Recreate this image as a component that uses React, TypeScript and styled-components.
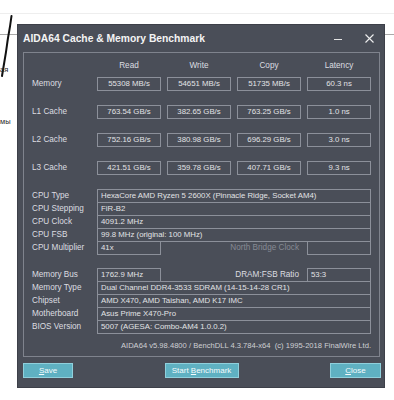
import React from 'react'
import styled, { createGlobalStyle } from 'styled-components'

const GlobalStyle = createGlobalStyle`
    html, body {
        margin: 0;
        padding: 0;
        background: #ffffff;
    }
    body {
        font-family: "Liberation Sans", Arial, sans-serif;
    }
`

const Page = styled.div`
    width: 394px;
    height: 400px;
    overflow: hidden;
    display: flex;
    background:
        linear-gradient(#eeeeee, #eeeeee) 0 13px / 100% 1px no-repeat,
        linear-gradient(#a9a9a9, #a9a9a9) 0 34px / 100% 1px no-repeat,
        #ffffff;
`

const Gutter = styled.div`
    width: 17px;
    flex-shrink: 0;
    position: relative;
`

const Scribble = styled.svg`
    position: absolute;
    left: 0;
    top: 14px;
`

const Snippet = styled.span<{ top: number }>`
    position: absolute;
    left: 0;
    top: ${({ top }) => top}px;
    font-size: 7.5px;
    color: #2a2a2a;
    font-family: "Liberation Sans", "Noto Sans", sans-serif;
`

const Window = styled.div`
    margin-top: 24px;
    width: 368px;
    height: 364px;
    box-sizing: border-box;
    background: #4a4e58;
    border: 1px solid #3d4049;
    display: flex;
    flex-direction: column;
    color: #dcdde0;
`

const TitleBar = styled.div`
    height: 27px;
    display: flex;
    align-items: center;
    justify-content: space-between;
    padding: 0 10px 0 5px;
`

const Title = styled.span`
    font-weight: bold;
    font-size: 10.3px;
    color: #f4f4f4;
`

const Controls = styled.div`
    display: flex;
    align-items: center;
    gap: 23px;
`

const Panel = styled.div`
    margin: 0 4px 0 5px;
    height: 305px;
    box-sizing: border-box;
    border: 1px solid #7f838d;
    padding: 6px 8px 0 8px;
    display: flex;
    flex-direction: column;
`

const BenchGrid = styled.div<{ gap?: number }>`
    display: grid;
    grid-template-columns: 59px repeat(4, 64px);
    column-gap: 6px;
    row-gap: ${({ gap = 0 }) => gap}px;
`

const ColHead = styled.div`
    height: 14px;
    line-height: 14px;
    text-align: center;
    font-size: 8.2px;
    margin-bottom: 4px;
`

const Label = styled.div<{ dim?: boolean; right?: boolean }>`
    font-size: 8.2px;
    line-height: 14px;
    height: 14px;
    white-space: nowrap;
    color: ${({ dim }) => (dim ? '#868a94' : '#dcdde0')};
    text-align: ${({ right }) => (right ? 'right' : 'left')};
    padding-right: ${({ right }) => (right ? '2px' : '0')};
`

const ValueBox = styled.div<{ left?: boolean }>`
    height: 14px;
    box-sizing: border-box;
    border: 1px solid #8c909a;
    font-size: 7.8px;
    line-height: 12px;
    white-space: nowrap;
    overflow: hidden;
    text-align: ${({ left }) => (left ? 'left' : 'center')};
    padding: 0 ${({ left }) => (left ? '3px' : '0')};
    color: #e2e3e6;
`

const InfoSection = styled.div<{ top: number }>`
    margin-top: ${({ top }) => top}px;
    display: flex;
    flex-direction: column;
`

const InfoRow = styled.div<{ split?: boolean }>`
    display: grid;
    grid-template-columns: ${({ split }) =>
        split ? '59px 64px 1fr 64px' : '59px 1fr'};
    column-gap: 6px;
    & + & {
        margin-top: -1px;
    }
`

const Footer = styled.div`
    margin-top: 7px;
    text-align: right;
    font-size: 7.6px;
    line-height: 10px;
    color: #cfd0d4;
    white-space: nowrap;
`

const ButtonBar = styled.div`
    margin: 6px 3px 0 5px;
    display: flex;
    justify-content: space-between;
    align-items: center;
`

const Button = styled.button<{ w: number }>`
    width: ${({ w }) => w}px;
    height: 15px;
    box-sizing: border-box;
    padding: 0;
    border: 1px solid #8fd0dc;
    background: #5fb1c2;
    color: #f4fbfc;
    font-family: "Liberation Sans", Arial, sans-serif;
    font-size: 8px;
    line-height: 13px;
    text-align: center;
    u {
        text-decoration: underline;
    }
`

const bench = [
    { name: 'Memory', values: ['55308 MB/s', '54651 MB/s', '51735 MB/s', '60.3 ns'] },
    { name: 'L1 Cache', values: ['763.54 GB/s', '382.65 GB/s', '763.25 GB/s', '1.0 ns'] },
    { name: 'L2 Cache', values: ['752.16 GB/s', '380.98 GB/s', '696.29 GB/s', '3.0 ns'] },
    { name: 'L3 Cache', values: ['421.51 GB/s', '359.78 GB/s', '407.71 GB/s', '9.3 ns'] },
]

const cpuRows = [
    ['CPU Type', 'HexaCore AMD Ryzen 5 2600X  (Pinnacle Ridge, Socket AM4)'],
    ['CPU Stepping', 'FiR-B2'],
    ['CPU Clock', '4091.2 MHz'],
    ['CPU FSB', '99.8 MHz  (original: 100 MHz)'],
]

const memRows = [
    ['Memory Type', 'Dual Channel DDR4-3533 SDRAM  (14-15-14-28 CR1)'],
    ['Chipset', 'AMD X470, AMD Taishan, AMD K17 IMC'],
    ['Motherboard', 'Asus Prime X470-Pro'],
    ['BIOS Version', '5007  (AGESA: Combo-AM4 1.0.0.2)'],
]

const App = () => {
    return (
        <Page>
            <GlobalStyle />
            <Gutter>
                <Scribble width="17" height="66" viewBox="0 0 17 66">
                    <path
                        d="M11.5 2 C10.5 10 9.5 16 8 24 C7 30 6.5 36 5 44 C4 50 3 56 2 62"
                        stroke="#111"
                        strokeWidth="2"
                        fill="none"
                        strokeLinecap="round"
                    />
                </Scribble>
                <Snippet top={65}>ая</Snippet>
                <Snippet top={117}>мы</Snippet>
            </Gutter>
            <Window>
                <TitleBar>
                    <Title>AIDA64 Cache &amp; Memory Benchmark</Title>
                    <Controls>
                        <svg width="8" height="8" viewBox="0 0 8 8">
                            <line x1="0" y1="4.5" x2="8" y2="4.5" stroke="#e4e4e4" strokeWidth="1" />
                        </svg>
                        <svg width="9" height="9" viewBox="0 0 9 9">
                            <path d="M0.5 0.5 L8.5 8.5 M8.5 0.5 L0.5 8.5" stroke="#eeeeee" strokeWidth="1.1" />
                        </svg>
                    </Controls>
                </TitleBar>
                <Panel>
                    <BenchGrid>
                        <div />
                        <ColHead>Read</ColHead>
                        <ColHead>Write</ColHead>
                        <ColHead>Copy</ColHead>
                        <ColHead>Latency</ColHead>
                    </BenchGrid>
                    <BenchGrid gap={14}>
                        {bench.map((row) => (
                            <React.Fragment key={row.name}>
                                <Label>{row.name}</Label>
                                {row.values.map((v) => (
                                    <ValueBox key={v}>{v}</ValueBox>
                                ))}
                            </React.Fragment>
                        ))}
                    </BenchGrid>

                    <InfoSection top={14}>
                        {cpuRows.map(([k, v]) => (
                            <InfoRow key={k}>
                                <Label>{k}</Label>
                                <ValueBox left>{v}</ValueBox>
                            </InfoRow>
                        ))}
                        <InfoRow split>
                            <Label>CPU Multiplier</Label>
                            <ValueBox left>41x</ValueBox>
                            <Label dim right>North Bridge Clock</Label>
                            <ValueBox left />
                        </InfoRow>
                    </InfoSection>

                    <InfoSection top={13}>
                        <InfoRow split>
                            <Label>Memory Bus</Label>
                            <ValueBox left>1762.9 MHz</ValueBox>
                            <Label right>DRAM:FSB Ratio</Label>
                            <ValueBox left>53:3</ValueBox>
                        </InfoRow>
                        {memRows.map(([k, v]) => (
                            <InfoRow key={k}>
                                <Label>{k}</Label>
                                <ValueBox left>{v}</ValueBox>
                            </InfoRow>
                        ))}
                    </InfoSection>

                    <Footer>
                        AIDA64 v5.98.4800 / BenchDLL 4.3.784-x64&nbsp; (c) 1995-2018 FinalWire Ltd.
                    </Footer>
                </Panel>
                <ButtonBar>
                    <Button w={50}>
                        <u>S</u>ave
                    </Button>
                    <Button w={74}>
                        Start <u>B</u>enchmark
                    </Button>
                    <Button w={51}>
                        <u>C</u>lose
                    </Button>
                </ButtonBar>
            </Window>
        </Page>
    )
}

export default App
